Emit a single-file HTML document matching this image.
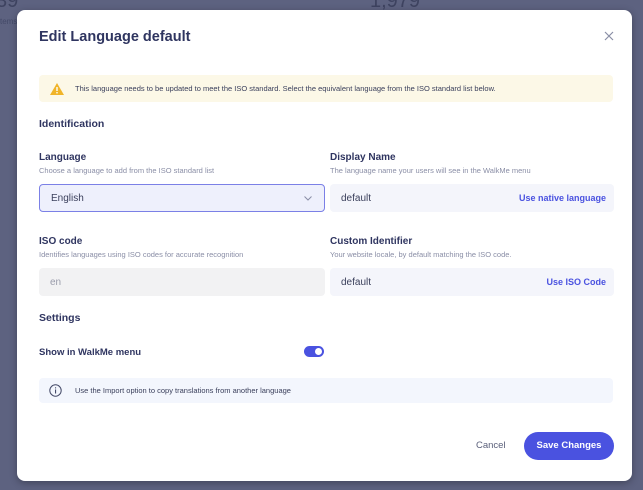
<!DOCTYPE html>
<html><head><style>
body{margin:0;width:643px;height:490px;background:#5d6280;font-family:"Liberation Sans",sans-serif;position:relative;overflow:hidden}
.a{position:absolute}
.bg{color:#3e4360;font-size:20px}
.modal{position:absolute;left:17px;top:10px;width:615px;height:471px;background:#fff;border-radius:8px;box-shadow:0 2px 8px rgba(0,0,0,.3)}
.t{color:#2f3560}
.lab{font-size:10px;font-weight:bold;color:#2f3560}
.sub{font-size:7.5px;color:#8a8ea6}
.inp{position:absolute;height:28px;border-radius:4px;background:#f4f5fb;font-size:10px;color:#3b405c;line-height:28px;box-sizing:border-box;padding-left:11px}
.lnk{position:absolute;right:8px;top:0;color:#4a52e0;font-weight:bold;font-size:9px}
</style></head><body>
<div class="a bg" style="left:-4px;top:-10px">39</div>
<div class="a bg" style="left:370px;top:-10px">1,979</div>
<div class="a" style="left:0;top:17px;font-size:8px;color:#444a68">tems</div>
<div class="modal">
<div class="a t" style="left:22px;top:19px;font-size:14.5px;font-weight:bold">Edit Language default</div>
<svg class="a" style="left:587px;top:21px" width="10" height="10"><path d="M1 1L9 9M9 1L1 9" stroke="#8a8ea6" stroke-width="1.2"/></svg>
<div class="a" style="left:22px;top:65px;width:574px;height:27px;background:#fcf8e7;border-radius:4px">
<svg class="a" style="left:11px;top:8px" width="14" height="12"><path d="M7 0L14 12H0Z" fill="#f0b429"/><rect x="6.3" y="4" width="1.4" height="4" fill="#fff"/><rect x="6.3" y="9" width="1.4" height="1.4" fill="#fff"/></svg>
<div class="a" style="left:36px;top:9px;font-size:7.5px;color:#3b405c">This language needs to be updated to meet the ISO standard. Select the equivalent language from the ISO standard list below.</div></div>
<div class="a lab" style="left:22px;top:108px;font-size:10.5px">Identification</div>
<div class="a lab" style="left:22px;top:142px">Language</div>
<div class="a sub" style="left:22px;top:156px">Choose a language to add from the ISO standard list</div>
<div class="inp" style="left:22px;top:174px;width:286px;border:1.5px solid #7b80e6;background:#eef0fc">English
<svg class="a" style="right:12px;top:11px" width="8" height="5"><path d="M0.5 0.5L4 4L7.5 0.5" stroke="#8a8ea6" fill="none"/></svg></div>
<div class="a lab" style="left:313px;top:142px">Display Name</div>
<div class="a sub" style="left:313px;top:156px">The language name your users will see in the WalkMe menu</div>
<div class="inp" style="left:313px;top:174px;width:284px;line-height:29px">default<span class="lnk">Use native language</span></div>
<div class="a lab" style="left:22px;top:226px">ISO code</div>
<div class="a sub" style="left:22px;top:240px">Identifies languages using ISO codes for accurate recognition</div>
<div class="inp" style="left:22px;top:258px;width:286px;background:#f2f2f3;color:#9a9cab;line-height:29px">en</div>
<div class="a lab" style="left:313px;top:226px">Custom Identifier</div>
<div class="a sub" style="left:313px;top:240px">Your website locale, by default matching the ISO code.</div>
<div class="inp" style="left:313px;top:258px;width:284px;line-height:29px">default<span class="lnk">Use ISO Code</span></div>
<div class="a lab" style="left:22px;top:302px;font-size:10.5px">Settings</div>
<div class="a lab" style="left:22px;top:337px;font-size:9.5px">Show in WalkMe menu</div>
<div class="a" style="left:287px;top:336px;width:20px;height:11px;border-radius:6px;background:#4a52e0"><div class="a" style="right:2px;top:2px;width:7px;height:7px;border-radius:50%;background:#fff"></div></div>
<div class="a" style="left:22px;top:368px;width:574px;height:25px;background:#f3f6fd;border-radius:4px">
<svg class="a" style="left:10px;top:6px" width="13" height="13"><circle cx="6.5" cy="6.5" r="5.7" stroke="#444a68" fill="none"/><rect x="6" y="5.5" width="1.1" height="4" fill="#444a68"/><rect x="6" y="3.3" width="1.1" height="1.1" fill="#444a68"/></svg>
<div class="a" style="left:36px;top:8px;font-size:7.5px;color:#3b405c">Use the Import option to copy translations from another language</div></div>
<div class="a" style="left:459px;top:430px;font-size:9.5px;color:#5a5f7a">Cancel</div>
<div class="a" style="left:507px;top:422px;width:90px;height:28px;border-radius:14px;background:#4a52e0;color:#fff;font-size:9.5px;font-weight:bold;text-align:center;line-height:28px">Save Changes</div>
</div>
</body></html>
